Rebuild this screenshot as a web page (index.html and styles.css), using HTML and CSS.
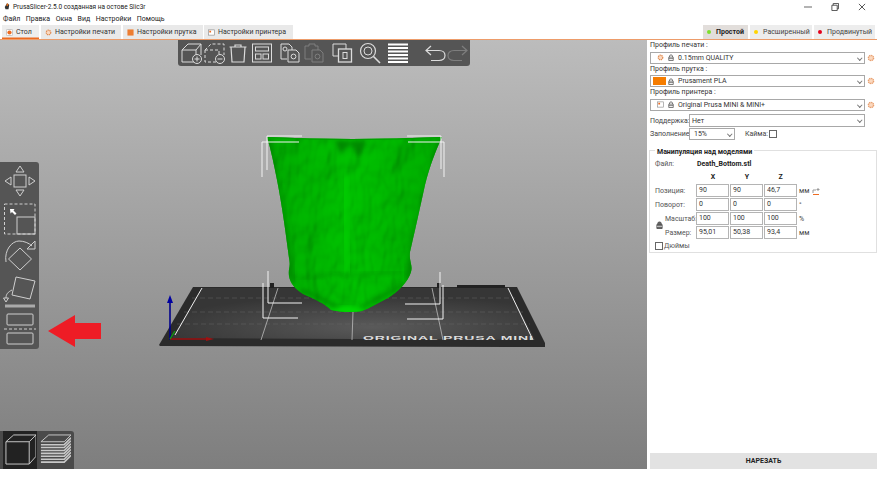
FILE: index.html
```html
<!DOCTYPE html>
<html lang="ru">
<head>
    <meta charset="UTF-8">
    <title>PrusaSlicer-2.5.0</title>
    <link rel="stylesheet" href="styles.css">
</head>
<body>
    <!-- Title bar -->
    <div class="title-bar">
        <svg class="app-icon" viewBox="0 0 8 9"><path d="M4 0 7 2 6 8 2 8 1 5Z" fill="#333"/><path d="M4 0 6 1 5 4 3 3Z" fill="#e8701a"/></svg>
        <span class="title-text">PrusaSlicer-2.5.0 созданная на остове Slic3r</span>
        <div class="win-controls">
            <svg viewBox="0 0 9 9"><path d="M0 4.5H9" stroke="#555"/></svg>
            <svg viewBox="0 0 9 9"><path d="M1 2.5H7V8.5H1ZM2.5 2.5V.5H8.5V6.5H7" fill="none" stroke="#444"/></svg>
            <svg viewBox="0 0 9 9"><path d="M1 1 8 8M8 1 1 8" stroke="#444"/></svg>
        </div>
    </div>

    <div class="menu-bar">
        <span>Файл</span><span>Правка</span><span>Окна</span><span>Вид</span><span>Настройки</span><span>Помощь</span>
    </div>

    <!-- Tabs -->
    <div class="tab-bar">
        <div class="tab tab-active tab-plater">
            <svg class="tab-icon" viewBox="0 0 8 8"><rect x=".5" y=".5" width="7" height="7" rx="1" fill="#fff" stroke="#bbb"/><circle cx="4" cy="4" r="2.4" fill="#ed6b21"/></svg>
            Стол
        </div>
        <div class="tab tab-print">
            <svg class="tab-icon" viewBox="0 0 8 8"><circle cx="4" cy="4" r="2.6" fill="#fbd9c0" stroke="#e08a50" stroke-width="1.4" stroke-dasharray="1.4 .6"/></svg>
            Настройки печати
        </div>
        <div class="tab tab-filament">
            <svg class="tab-icon" viewBox="0 0 8 8"><rect x=".5" y=".5" width="7" height="7" fill="#ed7d31"/></svg>
            Настройки прутка
        </div>
        <div class="tab tab-printer">
            <svg class="tab-icon" viewBox="0 0 8 8"><rect x=".5" y="1" width="7" height="6" fill="#fff" stroke="#888" stroke-width=".7"/><rect x="1.5" y="2" width="2" height="2" fill="#ed6b21"/></svg>
            Настройки принтера
        </div>
        <div class="modes">
            <div class="mode mode-active"><i class="dot dot-green"></i>Простой</div>
            <div class="mode mode-advanced"><i class="dot dot-yellow"></i>Расширенный</div>
            <div class="mode mode-expert"><i class="dot dot-red"></i>Продвинутый</div>
        </div>
    </div>

    <div class="main">
        <!-- 3D view -->
        <div class="canvas">
            <svg class="scene" viewBox="0 40 647 429">
                <defs>
                    <radialGradient id="bedGrad" cx="0.55" cy="0.75" r="0.6">
                        <stop offset="0" stop-color="#5a5a5a"/>
                        <stop offset="1" stop-color="#363636"/>
                    </radialGradient>
                    <linearGradient id="bodyGrad" x1="0" x2="1" y1="0" y2="0">
                        <stop offset="0" stop-color="#008a00"/>
                        <stop offset="0.5" stop-color="#00b400"/>
                        <stop offset="1" stop-color="#008800"/>
                    </linearGradient>
                    <filter id="soft"><feGaussianBlur stdDeviation="3"/></filter>
                    <filter id="softer"><feGaussianBlur stdDeviation="2"/></filter>
                    <filter id="bumps" x="0" y="0" width="1" height="1">
                        <feTurbulence type="fractalNoise" baseFrequency="0.045 0.025" numOctaves="3" seed="7"/>
                        <feDiffuseLighting surfaceScale="6" lighting-color="#00d400" diffuseConstant="1">
                            <feDistantLight azimuth="60" elevation="58"/>
                        </feDiffuseLighting>
                    </filter>
                    <path id="bodyPath" d="M267 137Q350 141 442 137C436 150 430 165 425 185C420 208 414 235 410 252C409 262 413 265 411 272C408 282 398 292 388 298C378 303 370 308 362 311C352 313 340 312 331 310C325 304 315 299 303 294C295 289 290 283 289 276C288 268 291 268 289 258C286 235 282 205 277 180C274 165 271 150 267 137Z"/>
                    <clipPath id="bodyClip"><use href="#bodyPath"/></clipPath>
                </defs>

                <!-- Bed -->
                <path d="M159 345 193 287H517L545 343V347L160 346Z" fill="#2b2b2b"/>
                <path d="M172 338 202 288H508L535 340Z" fill="url(#bedGrad)"/>
                <g stroke="#666" stroke-width=".5" stroke-dasharray="5 3">
                    <path d="M192 298H515M184 312H523M177 324H530"/>
                </g>
                <g stroke="#bdbdbd" stroke-width=".8" fill="none">
                    <path d="M278 288 261 340M353 312 352 340M432 288 443 340"/>
                </g>
                <g stroke="#eee" stroke-width="1" fill="none">
                    <path d="M175 335 202 288M508 288 533 340"/>
                </g>
                <path d="M270 283H274V288H270ZM437 283H441V288H437ZM457 285H505V288H457Z" fill="#222"/>
                <text class="bed-label" transform="translate(363 340) scale(1 .35)">ORIGINAL PRUSA MINI</text>

                <!-- Model -->
                <use href="#bodyPath" fill="url(#bodyGrad)"/>
                <g clip-path="url(#bodyClip)">
                    <rect x="260" y="130" width="190" height="185" filter="url(#bumps)" opacity=".5"/>
                    <path d="M346 175C343 210 346 250 349 275" stroke="#00d000" stroke-width="6" fill="none" filter="url(#soft)"/>
                    <path d="M268 140C275 190 285 240 292 280" stroke="#007c00" stroke-width="5" fill="none" filter="url(#soft)"/>
                    <path d="M442 140C430 190 415 240 408 280" stroke="#007e00" stroke-width="5" fill="none" filter="url(#soft)"/>
                    <path d="M335 141 341 154 350 144 358 156 366 141Z" fill="#007800" opacity=".7" filter="url(#softer)"/>
                    <path d="M300 279C320 276 338 272 352 276C370 271 388 275 402 272" stroke="#007800" stroke-width="1.500" opacity=".6" fill="none" filter="url(#softer)"/>
                    <path d="M300 290C320 296 330 303 338 308M404 284C385 296 372 300 362 307" stroke="#007c00" stroke-width="3" opacity=".7" fill="none" filter="url(#softer)"/>
                    <path d="M328 313C340 304 352 304 366 313Z" fill="#00dc00" filter="url(#softer)"/>
                    <path d="M267 137Q350 141 442 137" stroke="#009c00" stroke-width="2" fill="none"/>
                </g>

                <!-- Bounding box -->
                <g stroke="#f2f2f2" stroke-width="1" fill="none">
                    <path d="M302 136H267V170M299 142H262V177"/>
                    <path d="M407 136H441V169M408 142H444V177"/>
                    <path d="M268 271V303H302M263 283V318H298"/>
                    <path d="M440 272V304H405M443 285V319H407"/>
                </g>

                <!-- Axes -->
                <path d="M170 340V300" stroke="#00008c" stroke-width="1.6"/>
                <path d="M170 295 167 303H173Z" fill="#0000a0"/>
                <path d="M170 339H208" stroke="#9c1010" stroke-width="1.4"/>
                <path d="M214 339 206 337V341Z" fill="#a01010"/>
                <path d="M170 339 175 331" stroke="#109c10" stroke-width="1.4"/>

                <!-- Arrow -->
                <path d="M48 331 75 315V323H101V339H75V347Z" fill="#ee1c25"/>
            </svg>

            <!-- Top toolbar -->
            <div class="toolbar-top">
                <svg class="tool" viewBox="0 0 22 22"><path d="M1 8 7 2H20V13M1 8H15V20H1ZM15 8 20 2" /><circle cx="16" cy="17" r="4.5" class="on-panel"/><path d="M13.5 17H18.5M16 14.5V19.5"/></svg>
                <svg class="tool" viewBox="0 0 22 22"><path class="dash" d="M1 8 7 2H20V13M1 8V20H13M1 8H15V13"/><circle cx="16" cy="17" r="4.5" class="on-panel"/><path d="M13.5 17H18.5"/></svg>
                <svg class="tool" viewBox="0 0 22 22"><path d="M2.5 5H19.5M8 5V3H14V5M4 5 5 20H17L18 5" stroke-width="1.2"/></svg>
                <svg class="tool tool-s" viewBox="0 0 22 22"><rect x="1.5" y="2" width="19" height="18"/><rect x="4.5" y="5" width="13" height="4"/><rect x="4.5" y="12" width="5.5" height="5"/><rect x="12" y="12" width="5.5" height="5"/></svg>
                <svg class="tool tool-sep" viewBox="0 0 22 22"><path d="M2 2H10L13 5V8M2 2V17H8"/><circle cx="6" cy="7" r="2"/><path d="M9 8H17L20 11V20H9Z"/><circle cx="14.5" cy="14.5" r="2.4"/></svg>
                <svg class="tool tool-dim tool-s" viewBox="0 0 22 22"><path d="M2 4H6V2H12V4H15V8M2 4V17H8"/><path d="M9 8H17L20 11V20H9Z"/><circle cx="14.5" cy="14.5" r="2.4"/></svg>
                <svg class="tool tool-sep" viewBox="0 0 22 22"><path d="M8 14H2V2H15V7"/><rect x="7.5" y="7" width="13" height="13" stroke-width="1.3"/><rect x="12" y="10.5" width="4" height="6"/></svg>
                <svg class="tool tool-sep" viewBox="0 0 22 22"><circle cx="9" cy="9" r="7.5" stroke-width="1.2"/><circle cx="9" cy="9" r="4"/><path d="M14.5 14.5 21 21" stroke-width="1.6"/></svg>
                <svg class="tool tool-sep" viewBox="0 0 22 22"><path class="bars" d="M1 2.5H21M1 6H21M1 9.5H21M1 13H21M1 16.5H21M1 20H21"/></svg>
                <svg class="tool tool-far" viewBox="0 0 22 22"><path d="M7 4 2 8.5 7 13M2 8.5H15C19 8.5 21 11 21 13.5S19 18.500 15 18.500H7" stroke-width="1.2"/></svg>
                <svg class="tool tool-dim" viewBox="0 0 22 22"><path d="M15 4 20 8.5 15 13M20 8.500H7C3 8.500 1 11 1 13.500S3 18.500 7 18.500H15" stroke-width="1.2"/></svg>
            </div>

            <!-- Left toolbar -->
            <div class="toolbar-left">
                <svg class="gizmo" viewBox="0 0 34 34"><rect x="11" y="11" width="12" height="12"/><path d="M17 2 13 8H21ZM17 32 13 26H21ZM2 17 8 13V21ZM32 17 26 13V21Z"/></svg>
                <svg class="gizmo" viewBox="0 0 34 34"><rect class="dash" x="1.500" y="3" width="30.500" height="30"/><rect x="14" y="16" width="18" height="17"/><path class="solid" d="M7 8H11.500L10.500 9.500 13.500 12.500 12 14 9 11 7.500 12.500Z"/></svg>
                <svg class="gizmo" viewBox="0 0 34 34"><path d="M17 10 28.500 21 17 32 5.500 21Z"/><path d="M3 24C1 12 9 3 16 3 21 3 26 5 29 8"/><path d="M24 11H32V3Z"/></svg>
                <svg class="gizmo" viewBox="0 0 34 34"><path d="M13 2 32 6 27 24 9 20Z"/><path d="M9 15C5 17 3 19 3 23"/><path d="M.5 23H5.500L3 27Z"/><path class="thick" d="M2 31H32"/></svg>
                <svg class="gizmo" viewBox="0 0 34 34"><rect x="4" y="2" width="26" height="11" rx="1"/><path class="dash" d="M1 17H33"/><rect x="4" y="21" width="26" height="11" rx="1"/></svg>
            </div>

            <!-- View switch -->
            <div class="view-switch">
                <div class="view-btn view-btn-active">
                    <svg viewBox="0 0 33 34"><path d="M2 9 10 2H33V24L26 32H2ZM2 9H26V32M26 9 33 2"/></svg>
                </div>
                <div class="view-btn view-btn-layers">
                    <svg viewBox="0 0 33 34"><path class="layer-top" d="M2 9 10 2H33L26 9H2Z"/><path d="M2 12H26L33 5M2 15H26L33 8M2 18H26L33 11M2 21H26L33 14M2 24H26L33 17M2 27H26L33 20M2 30H26L33 23"/></svg>
                </div>
            </div>
        </div>

        <!-- Right panel -->
        <div class="sidebar">
            <div class="field-label">Профиль печати :</div>
            <div class="preset">
                <div class="combo combo-wide">
                    <svg class="swatch-icon" viewBox="0 0 8 8"><circle cx="4" cy="4" r="2.600" fill="#fbd9c0" stroke="#e08a50" stroke-width="1.400" stroke-dasharray="1.400 .6"/></svg>
                    <svg class="lock" viewBox="0 0 8 9"><path d="M2 4V2.500C2 .5 6 .5 6 2.500V4M1 4H7V8.500H1Z" fill="none" stroke="#555"/><path d="M1 6H7" stroke="#555"/></svg>
                    0.15mm QUALITY
                </div>
                <svg class="gear" viewBox="0 0 8 8"><circle cx="4" cy="4" r="2.600" fill="#fbd9c0" stroke="#e8a070" stroke-width="1.400" stroke-dasharray="1.400 .6"/></svg>
            </div>
            <div class="field-label">Профиль прутка :</div>
            <div class="preset">
                <div class="combo combo-wide">
                    <span class="color-box"></span>
                    <svg class="lock" viewBox="0 0 8 9"><path d="M2 4V2.500C2 .5 6 .5 6 2.500V4M1 4H7V8.500H1Z" fill="none" stroke="#555"/><path d="M1 6H7" stroke="#555"/></svg>
                    Prusament PLA
                </div>
                <svg class="gear" viewBox="0 0 8 8"><circle cx="4" cy="4" r="2.600" fill="#fbd9c0" stroke="#e8a070" stroke-width="1.400" stroke-dasharray="1.400 .6"/></svg>
            </div>
            <div class="field-label">Профиль принтера :</div>
            <div class="preset">
                <div class="combo combo-wide">
                    <svg class="swatch-icon" viewBox="0 0 8 8"><rect x=".5" y="1" width="7" height="6" fill="#fff" stroke="#888" stroke-width=".7"/><rect x="1.500" y="2" width="2" height="2" fill="#ed6b21"/></svg>
                    <svg class="lock" viewBox="0 0 8 9"><path d="M2 4V2.500C2 .5 6 .5 6 2.500V4M1 4H7V8.500H1Z" fill="none" stroke="#555"/><path d="M1 6H7" stroke="#555"/></svg>
                    Original Prusa MINI &amp; MINI+
                </div>
                <svg class="gear" viewBox="0 0 8 8"><circle cx="4" cy="4" r="2.600" fill="#fbd9c0" stroke="#e8a070" stroke-width="1.400" stroke-dasharray="1.400 .6"/></svg>
            </div>

            <div class="support-row">
                <span class="inline-label">Поддержка:</span>
                <div class="combo combo-support">Нет</div>
            </div>
            <div class="infill-row">
                <span class="inline-label">Заполнение:</span>
                <div class="combo combo-infill">15%</div>
                <span class="inline-label brim-label">Кайма:</span>
                <span class="checkbox"></span>
            </div>

            <!-- Object manipulation -->
            <div class="manip">
                <div class="manip-title">Манипуляция над моделями</div>
                <div class="file-row"><span class="muted">Файл:</span><b>Death_Bottom.stl</b></div>
                <div class="grid">
                    <span></span><b class="axis">X</b><b class="axis">Y</b><b class="axis">Z</b><span></span>
                    <span class="muted">Позиция:</span><div class="num">90</div><div class="num">90</div><div class="num">46,7</div>
                    <span class="unit">мм <svg class="drop" viewBox="0 0 8 8"><path d="M1 7.500H7" stroke="#ed6b21"/><path d="M1 6V3H4M6 1V4M4.500 2.500H7.500" fill="none" stroke="#999"/></svg></span>
                    <span class="muted">Поворот:</span><div class="num">0</div><div class="num">0</div><div class="num">0</div><span class="unit">°</span>
                    <span class="muted indent">Масштаб:</span><div class="num">100</div><div class="num">100</div><div class="num">100</div><span class="unit">%</span>
                    <span class="muted indent">Размер:</span><div class="num">95,01</div><div class="num">50,38</div><div class="num">93,4</div><span class="unit">мм</span>
                    <svg class="grid-lock" viewBox="0 0 8 9"><path d="M2 4V2.500C2 .5 6 .5 6 2.500V4M1 4H7V8.500H1Z" fill="#666" stroke="#555"/><path d="M1 6H7" stroke="#ddd"/></svg>
                </div>
                <div class="inches"><span class="checkbox"></span><span class="muted">Дюймы</span></div>
            </div>

            <div class="slice-btn">НАРЕЗАТЬ</div>
        </div>
    </div>
</body>
</html>
```

FILE: styles.css
```css
/* Reset */
html, body {
    margin: 0;
    padding: 0;
    width: 877px;
    height: 493px;
    overflow: hidden;
    background: #fff;
    font-family: Roboto, "Noto Sans", sans-serif;
    font-size: 7px;
    color: #333;
    white-space: nowrap;
}

/* Title bar and menu */
.title-bar {
    height: 13px;
    display: flex;
    align-items: center;
    padding-left: 4px;
    color: #222;
    font-size: 6.5px;
}

.app-icon {
    width: 6px;
    height: 7px;
    margin-right: 3px;
}

.win-controls {
    margin-left: auto;
    display: flex;
    gap: 19px;
    padding-right: 11px;
}

.win-controls svg {
    width: 8px;
    height: 8px;
}

.menu-bar {
    height: 12px;
    display: flex;
    align-items: center;
    gap: 5.5px;
    padding-left: 3px;
    color: #222;
}

/* Tabs */
.tab-bar {
    height: 14px;
    display: flex;
    border-bottom: 1px solid #ed9c6a;
    padding-left: 2px;
}

.tab {
    display: flex;
    align-items: center;
    gap: 3px;
    padding-left: 4px;
    background: #e9e9e9;
    color: #333;
    margin-right: 2px;
}

.tab-icon {
    width: 7px;
    height: 7px;
    flex: none;
}

.tab-plater { width: 33px; }
.tab-print { width: 76px; }
.tab-filament { width: 76px; margin-right: 1px; }
.tab-printer { width: 85px; }

.tab-active {
    background: #eeeeee;
    box-shadow: inset 0 -1.5px 0 #ed6b21;
}

.modes {
    margin-left: auto;
    display: flex;
    gap: 2px;
    padding-right: 2px;
}

.mode {
    display: flex;
    align-items: center;
    background: #ededed;
    color: #444;
}

.mode-active {
    width: 45px;
    background: #e2dedb;
    font-weight: bold;
    color: #222;
}

.mode-advanced { width: 62px; }
.mode-expert { width: 61px; }

.dot {
    width: 4px;
    height: 4px;
    flex: none;
    border-radius: 50%;
    margin: 0 5px 0 4px;
}

.dot-green { background: #7ee02c; }
.dot-yellow { background: #ffd400; }
.dot-red { background: #e3001b; }

/* Main area */
.main {
    height: 429px;
    display: flex;
}

.canvas {
    position: relative;
    width: 647px;
    background: linear-gradient(180deg, #bcbcbc 0%, #7e7e7e 100%);
}

.scene {
    position: absolute;
    left: 0;
    top: 0;
    width: 647px;
    height: 429px;
}

.bed-label {
    font-family: "Liberation Sans", sans-serif;
    font-weight: bold;
    font-size: 14px;
    letter-spacing: .9px;
    fill: #dedede;
}

/* Toolbars over the 3D view */
.toolbar-top {
    position: absolute;
    left: 178px;
    top: 0;
    width: 289px;
    height: 26px;
    padding-left: 3px;
    display: flex;
    align-items: center;
    gap: 1px;
    background: #555;
    border-radius: 0 0 3px 3px;
}

.tool {
    width: 22px;
    height: 22px;
    flex: none;
    fill: none;
    stroke: #dcdcdc;
    stroke-width: 1;
}

.tool-s { margin-left: 1px; }
.tool-sep { margin-left: 5px; }
.tool-far { margin-left: 14px; }
.tool-dim { opacity: 0.3; }

.on-panel { fill: #555; }
.dash { stroke-dasharray: 3 2; }
.bars { stroke: #fff; stroke-width: 2.2; }

.toolbar-left {
    position: absolute;
    left: 0;
    top: 122px;
    width: 39px;
    height: 187px;
    padding-top: 2px;
    box-sizing: border-box;
    display: flex;
    flex-direction: column;
    gap: 3px;
    background: #555;
    border-radius: 0 3px 3px 0;
}

.gizmo {
    width: 34px;
    height: 34px;
    margin-left: 3px;
    flex: none;
    fill: none;
    stroke: #cfcfcf;
    stroke-width: 1;
}

.gizmo .solid { fill: #fff; stroke: none; }
.gizmo .thick { stroke-width: 3; stroke: #aaa; }

.view-switch {
    position: absolute;
    left: 0;
    bottom: 0;
    width: 74px;
    height: 38px;
    display: flex;
    gap: 1px;
    padding-left: 3px;
    box-sizing: border-box;
    background: #4a4a4a;
    border-radius: 0 3px 0 0;
}

.view-btn {
    width: 34px;
    padding: 2px 0 0 1px;
    box-sizing: border-box;
}

.view-btn-active { background: #222; }

.view-btn svg {
    width: 32px;
    height: 33px;
    fill: none;
    stroke: #c8c8c8;
    stroke-width: 1;
}

.view-btn-layers svg {
    stroke-width: 1.6;
}

.layer-top {
    stroke-width: 1;
}

/* Right panel */
.sidebar {
    width: 230px;
    box-sizing: border-box;
    padding-left: 3px;
    display: flex;
    flex-direction: column;
    background: #fff;
}

.field-label {
    height: 11.5px;
    line-height: 11px;
}

.preset {
    display: flex;
    align-items: center;
    height: 12px;
}

.combo {
    position: relative;
    box-sizing: border-box;
    height: 12px;
    display: flex;
    align-items: center;
    border: 1px solid #a8a8a8;
    background: #fff;
    color: #333;
    padding-left: 2px;
}

.combo::after {
    content: "";
    position: absolute;
    right: 3px;
    top: 3px;
    width: 2.5px;
    height: 2.5px;
    border-right: 1px solid #777;
    border-bottom: 1px solid #777;
    transform: rotate(45deg);
}

.combo-wide { width: 215px; }

.swatch-icon {
    width: 7px;
    height: 7px;
    margin-left: 4px;
    margin-right: 3px;
}

.color-box {
    width: 13px;
    height: 8px;
    background: #f57c00;
    margin-right: 1px;
}

.lock {
    width: 6px;
    height: 7px;
    margin-left: 1px;
    margin-right: 4px;
}

.gear {
    width: 8px;
    height: 8px;
    margin-left: 2px;
}

.support-row {
    display: flex;
    align-items: center;
    margin-top: 3.5px;
}

.infill-row {
    display: flex;
    align-items: center;
    margin-top: 1px;
}

.inline-label {
    width: 39px;
    flex: none;
    color: #444;
}

.combo-support { width: 176px; height: 13px; }
.combo-infill { width: 46px; padding-left: 4px; }

.brim-label {
    width: 24px;
    margin-left: 10px;
}

.checkbox {
    width: 8px;
    height: 8px;
    box-sizing: border-box;
    border: 1px solid #666;
    background: #fff;
    flex: none;
}

/* Object manipulation box */
.manip {
    position: relative;
    box-sizing: border-box;
    margin-top: 10px;
    margin-left: -1px;
    width: 228px;
    height: 103px;
    border: 1px solid #e0e0e0;
    padding: 7px 0 0 5px;
}

.manip-title {
    position: absolute;
    left: 5px;
    top: -3px;
    padding: 0 2px;
    background: #fff;
    font-weight: bold;
    color: #222;
}

.muted { color: #555; }

.file-row {
    display: flex;
    height: 12px;
    align-items: center;
    color: #222;
}

.file-row .muted { width: 42px; }

.grid {
    position: relative;
    display: grid;
    grid-template-columns: 41px 34px 34px 33px 40px;
    grid-template-rows: 12px repeat(4, 13px);
    row-gap: 1px;
    align-items: center;
    margin-top: 1px;
}

.axis {
    text-align: center;
    color: #222;
}

.indent { padding-left: 10px; }

.num {
    box-sizing: border-box;
    width: 33px;
    height: 13px;
    line-height: 11px;
    border: 1px solid #b4b4b4;
    padding-left: 2px;
    color: #333;
}

.unit {
    padding-left: 2px;
    display: flex;
    align-items: center;
    gap: 3px;
    color: #444;
}

.drop {
    width: 8px;
    height: 8px;
}

.grid-lock {
    position: absolute;
    left: 1px;
    top: 50px;
    width: 7px;
    height: 8px;
}

.inches {
    display: flex;
    align-items: center;
    gap: 1px;
    margin-top: 3px;
}

.slice-btn {
    margin-top: auto;
    height: 16px;
    line-height: 16px;
    background: #e2e2e2;
    text-align: center;
    font-weight: bold;
    color: #222;
}
```
